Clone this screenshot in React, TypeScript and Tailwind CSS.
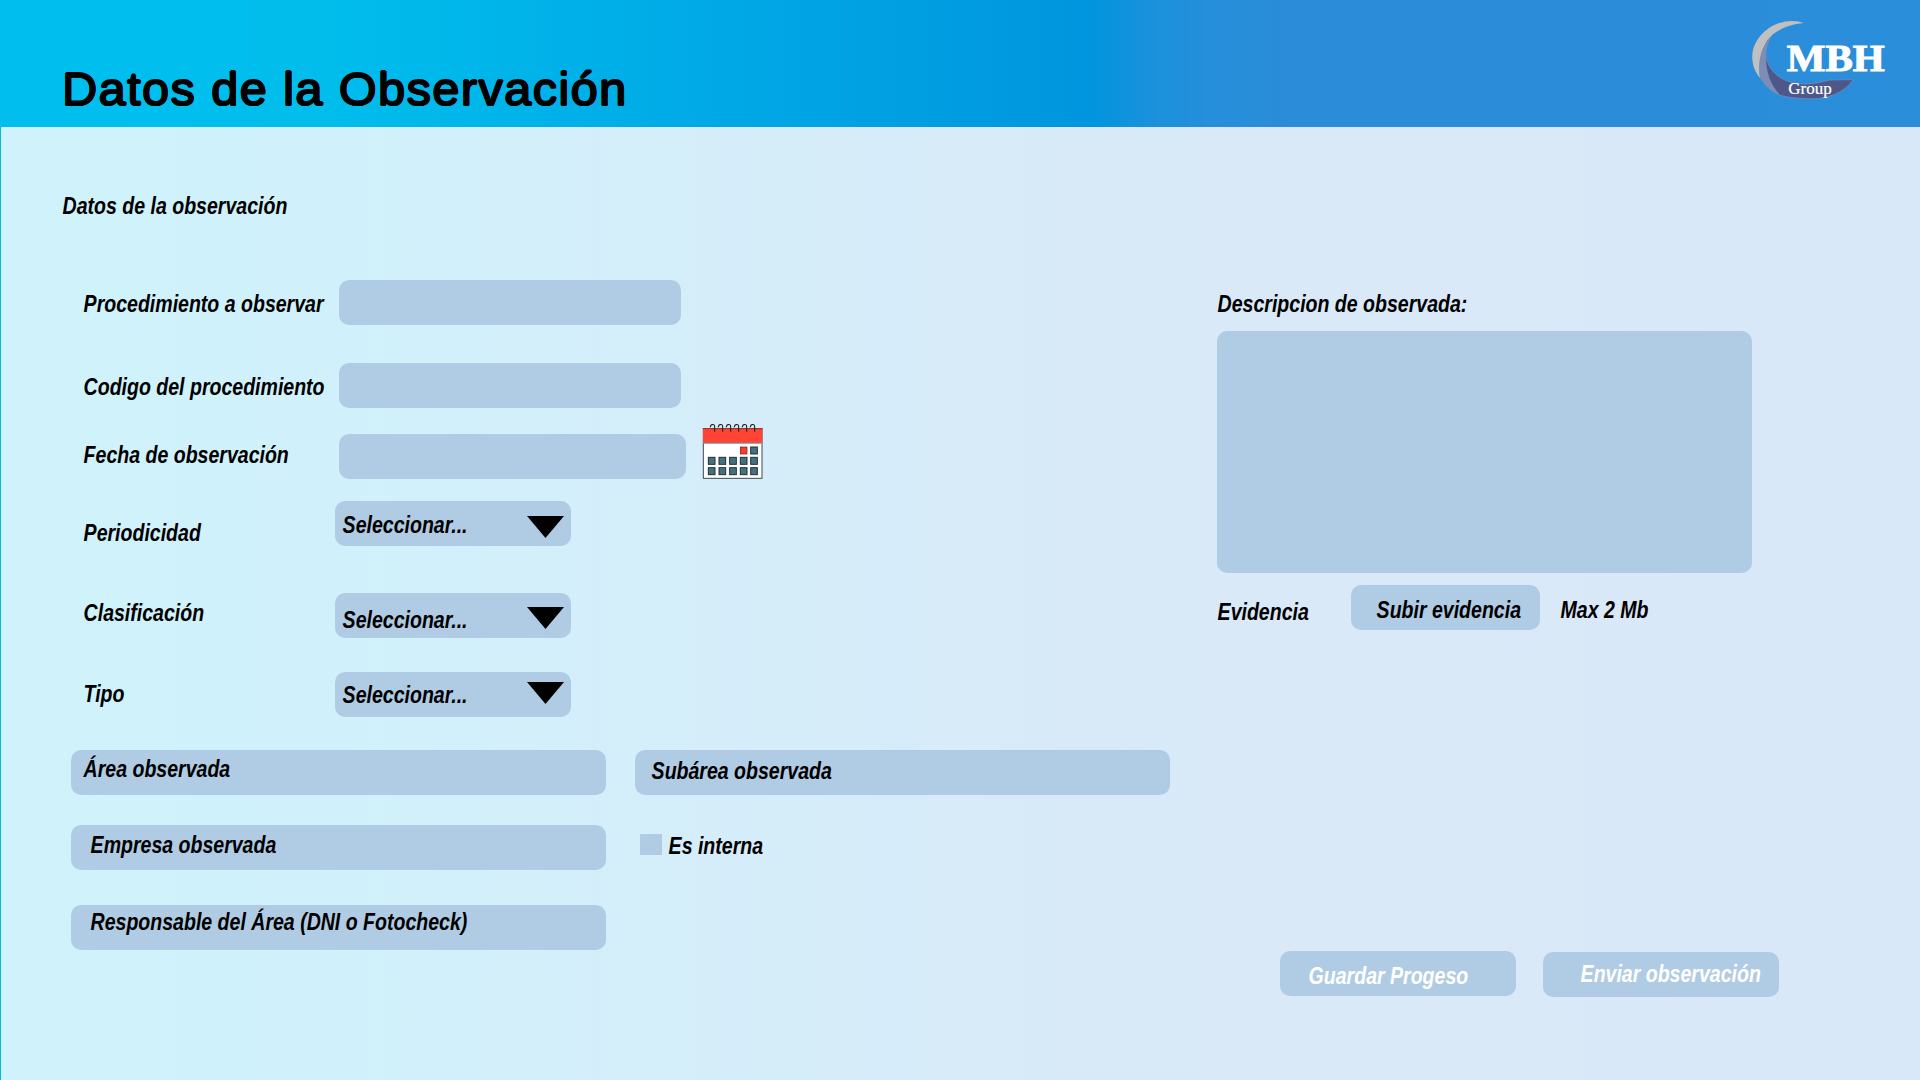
import type { ReactNode } from "react";

/** Narrow bold-italic caption used for every label on the form. */
function Caption({ children, className = "" }: { children: ReactNode; className?: string }) {
  return (
    <span
      className={`block h-6 w-0 origin-left -translate-x-[0.4px] scale-x-[0.814] whitespace-nowrap font-['Liberation_Sans',Arial,sans-serif] text-[24px] font-bold italic leading-6 ${className}`}
    >
      {children}
    </span>
  );
}

function Logo() {
  return (
    <svg className="h-[130px] w-[190px]" viewBox="0 0 570 390" role="img" aria-label="MBH Group">
      <path
        d="M221 69C196 58 150 60 116 85C80 110 64 147 67 178C69 202 78 220 90 233C85 200 92 155 112 121C132 94 172 73 221 69Z"
        fill="#bfc0c0"
      />
      <path
        d="M125 108C104 126 90 158 88 190C87 208 88 222 91 234C105 258 125 277 152 287C124 255 105 205 108 165C109 142 116 123 125 108Z"
        fill="#7d8db5"
      />
      <path
        d="M108 168C114 212 150 241 195 250C235 257 268 247 300 240L370 239C342 279 290 300 232 296C200 295 172 292 150 286C125 260 104 218 108 168Z"
        fill="#4d5888"
        stroke="#7b8cb9"
        strokeWidth="2"
      />
      <text
        x="170"
        y="212"
        textLength="294"
        lengthAdjust="spacingAndGlyphs"
        fill="#fff"
        stroke="#fff"
        strokeWidth="3"
        fontFamily="'Liberation Serif', serif"
        fontWeight="700"
        fontSize="112"
      >
        MBH
      </text>
      <text
        x="175"
        y="283"
        textLength="130"
        lengthAdjust="spacingAndGlyphs"
        fill="#fff"
        stroke="#fff"
        strokeWidth="0.6"
        fontFamily="'Liberation Serif', serif"
        fontSize="49"
      >
        Group
      </text>
    </svg>
  );
}

const rings = [61, 85, 109, 133, 157, 181];
const days = [
  [150, 95, true],
  [181, 95, false],
  ...[126, 157].flatMap((y) => [54, 86, 118, 150, 181].map((x) => [x, y, false])),
] as [number, number, boolean][];

function CalendarIcon() {
  return (
    <svg className="h-[75px] w-[90px] shrink-0" viewBox="0 0 270 225" aria-label="Calendario">
      <rect x="40" y="41" width="176" height="149" fill="#fff" stroke="#3f4a4e" strokeWidth="3" />
      <rect x="39" y="41" width="178" height="43" fill="#ff4433" />
      <path d="M38 41H218" stroke="#8c2f28" strokeWidth="2.5" />
      <path d="M38 85H218" stroke="#76a5aa" strokeWidth="3" />
      {rings.map((x) => (
        <path key={x} d={`M${x} 37C${x} 27 ${x + 13} 25 ${x + 13} 35V50`} fill="none" stroke="#1d1d1d" strokeWidth="3.2" />
      ))}
      {days.map(([x, y, active]) => (
        <rect
          key={`${x}-${y}`}
          x={x + 1}
          y={y + 1}
          width="20"
          height="21"
          fill={active ? "#ff3b2c" : "#47707f"}
          stroke={active ? "#5a1f1a" : "#1f3038"}
          strokeWidth={active ? 2 : 3}
        />
      ))}
    </svg>
  );
}

function Select({ className = "", textClass, arrowClass }: { className?: string; textClass: string; arrowClass: string }) {
  return (
    <button className={`flex h-[45px] w-[236px] items-start rounded-[10px] bg-[#b0cce4] pl-2 ${className}`}>
      <Caption className={textClass}>Seleccionar...</Caption>
      <svg className={`ml-[184px] h-[22px] w-[37px] ${arrowClass}`} viewBox="0 0 37 22">
        <path d="M0 0H37L18.5 22Z" fill="#000" />
      </svg>
    </button>
  );
}

function Bar({ children, className = "" }: { children: ReactNode; className?: string }) {
  return <div className={`flex h-[45px] w-[535px] rounded-[10px] bg-[#b0cce4] ${className}`}>{children}</div>;
}

export default function App() {
  return (
    <div className="flex h-[1080px] w-[1920px] flex-col overflow-hidden bg-[#00b9e9] text-black">
      <header className="flex h-[127px] shrink-0 justify-between bg-[linear-gradient(90deg,#00bfee_0px,#00bdec_330px,#00a9e6_720px,#0095de_1090px,#1a91dc_1150px,#258fdb_1210px,#2b8cd9_1290px,#2b8edb_1920px)]">
        <h1 className="ml-[62px] mt-[62px] h-[54px] w-0 origin-left scale-x-[1.06] whitespace-nowrap font-['Liberation_Sans',Arial,sans-serif] text-[46px] leading-[54px] tracking-[1.3px] [text-shadow:0.8px_0_black,-0.8px_0_black,0_0.9px_black,0_-0.9px_black,0.5px_0.5px_black,-0.5px_0.5px_black,0.5px_-0.5px_black,-0.5px_-0.5px_black]">
          Datos de la Observación
        </h1>
        <Logo />
      </header>

      <main className="ml-px flex grow bg-[linear-gradient(90deg,#cff2fb_0px,#d0f1fb_330px,#d4eefa_640px,#d7ebf9_950px,#d9e9f8_1240px,#d9e8f8_1919px)]">
        <section className="w-[1216px] shrink-0">
          <h2 className="ml-[62px] mt-[67px]">
            <Caption>Datos de la observación</Caption>
          </h2>

          <div className="ml-[83px] mt-[62px] flex h-[45px]">
            <div className="w-[255px] pt-3">
              <Caption>Procedimiento a observar</Caption>
            </div>
            <div className="h-[45px] w-[342px] rounded-[10px] bg-[#b0cce4]" />
          </div>

          <div className="ml-[83px] mt-[38px] flex h-[45px]">
            <div className="w-[255px] pt-3">
              <Caption>Codigo del procedimiento</Caption>
            </div>
            <div className="h-[45px] w-[342px] rounded-[10px] bg-[#b0cce4]" />
          </div>

          <div className="ml-[83px] mt-[26px] flex h-[45px]">
            <div className="w-[255px] pt-[9px]">
              <Caption>Fecha de observación</Caption>
            </div>
            <div className="h-[45px] w-[347px] rounded-[10px] bg-[#b0cce4]" />
            <div className="-mt-[19px] ml-1">
              <CalendarIcon />
            </div>
          </div>

          <div className="ml-[83px] mt-[22px] flex h-[45px]">
            <div className="w-[251px] pt-5">
              <Caption>Periodicidad</Caption>
            </div>
            <Select textClass="mt-3" arrowClass="mt-[15px]" />
          </div>

          <div className="ml-[83px] mt-[47px] flex h-[45px]">
            <div className="w-[251px] pt-2">
              <Caption>Clasificación</Caption>
            </div>
            <Select textClass="mt-[15px]" arrowClass="mt-[14px]" />
          </div>

          <div className="ml-[83px] mt-[34px] flex h-[45px]">
            <div className="w-[251px] pt-[10px]">
              <Caption>Tipo</Caption>
            </div>
            <Select textClass="mt-[11px]" arrowClass="mt-[10px]" />
          </div>

          <div className="ml-[70px] mt-[33px] flex gap-[29px]">
            <Bar className="pl-[13px] pt-[7px]">
              <Caption>Área observada</Caption>
            </Bar>
            <Bar className="pl-[17px] pt-[9px]">
              <Caption>Subárea observada</Caption>
            </Bar>
          </div>

          <div className="ml-[70px] mt-[30px] flex">
            <Bar className="pl-5 pt-2">
              <Caption>Empresa observada</Caption>
            </Bar>
            <div className="ml-[34px] mt-[9px] flex">
              <div className="h-[21px] w-[22px] bg-[#b0cce4]" />
              <Caption className="ml-[7px]">Es interna</Caption>
            </div>
          </div>

          <Bar className="ml-[70px] mt-[35px] pl-5 pt-[5px]">
            <Caption>Responsable del Área (DNI o Fotocheck)</Caption>
          </Bar>
        </section>

        <section className="w-[562px] shrink-0">
          <Caption className="ml-px mt-[165px]">Descripcion de observada:</Caption>
          <div className="mt-[15px] h-[242px] w-[535px] rounded-[10px] bg-[#b0cce4]" />

          <div className="mt-3 flex h-[45px]">
            <div className="w-[134px] pl-px pt-[15px]">
              <Caption>Evidencia</Caption>
            </div>
            <button className="flex h-[45px] w-[189px] rounded-[10px] bg-[#b0cce4] pl-[26px] pt-[13px] text-left">
              <Caption>Subir evidencia</Caption>
            </button>
            <Caption className="ml-[21px] mt-[13px]">Max 2 Mb</Caption>
          </div>

          <div className="ml-[63px] mt-[321px] flex gap-[27px] text-white">
            <button className="flex h-[45px] w-[236px] rounded-[10px] bg-[#b0cce4] pl-[29px] pt-[13px]">
              <Caption>Guardar Progeso</Caption>
            </button>
            <button className="mt-px flex h-[45px] w-[236px] rounded-[10px] bg-[#b0cce4] pl-[38px] pt-[10px]">
              <Caption>Enviar observación</Caption>
            </button>
          </div>
        </section>
      </main>
    </div>
  );
}
